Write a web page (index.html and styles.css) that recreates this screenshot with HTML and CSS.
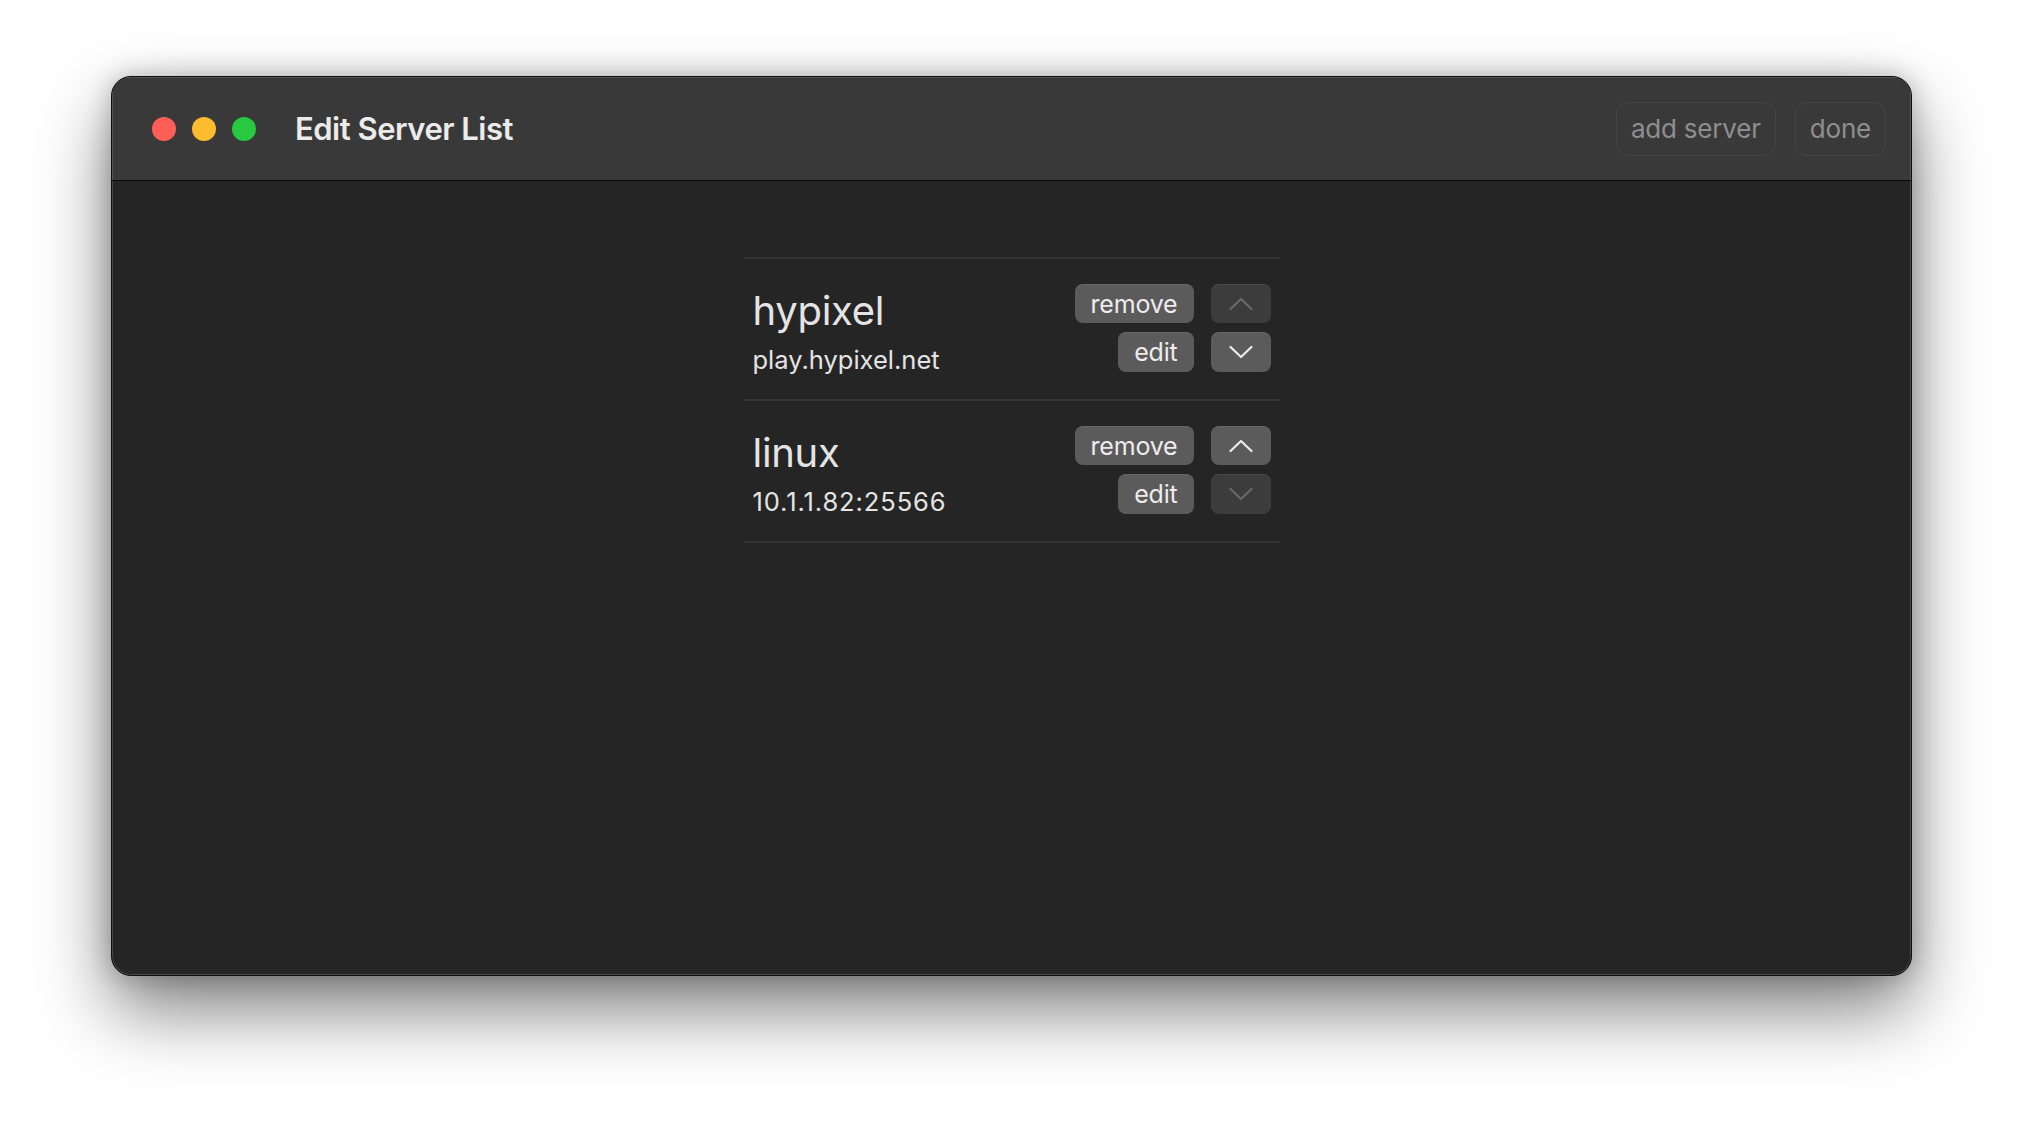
FILE: index.html
```html
<!DOCTYPE html>
<html>
<head>
<meta charset="utf-8">
<link rel="stylesheet" href="styles.css">
</head>
<body>
<div class="window">
  <header class="titlebar">
    <div class="lights">
      <span class="light red"></span>
      <span class="light yellow"></span>
      <span class="light green"></span>
    </div>
    <h1 class="title">Edit Server List</h1>
    <div class="toolbar">
      <button class="tb-btn">add server</button>
      <button class="tb-btn">done</button>
    </div>
  </header>
  <main class="content">
    <ul class="server-list">
      <li class="row">
        <div class="info">
          <div class="name">hypixel</div>
          <div class="addr">play.hypixel.net</div>
        </div>
        <div class="actions">
          <button class="btn">remove</button>
          <button class="btn arrow disabled"><svg viewBox="0 0 24 14" width="24" height="14"><path d="M1.5 12 L12 2 L22.5 12"/></svg></button>
          <button class="btn">edit</button>
          <button class="btn arrow"><svg viewBox="0 0 24 14" width="24" height="14"><path d="M1.5 2 L12 12 L22.5 2"/></svg></button>
        </div>
      </li>
      <li class="row">
        <div class="info">
          <div class="name">linux</div>
          <div class="addr addr-ip">10.1.1.82:25566</div>
        </div>
        <div class="actions">
          <button class="btn">remove</button>
          <button class="btn arrow"><svg viewBox="0 0 24 14" width="24" height="14"><path d="M1.5 12 L12 2 L22.5 12"/></svg></button>
          <button class="btn">edit</button>
          <button class="btn arrow disabled"><svg viewBox="0 0 24 14" width="24" height="14"><path d="M1.5 2 L12 12 L22.5 2"/></svg></button>
        </div>
      </li>
    </ul>
  </main>
</div>
</body>
</html>
```

FILE: styles.css
```css
html, body {
  margin: 0;
  padding: 0;
  background: #ffffff;
}
body {
  padding: 76px 0 0 111px;
  font-family: Inter, "Liberation Sans", sans-serif;
  height: 1124px;
  box-sizing: border-box;
  overflow: hidden;
}
.window {
  width: 1801px;
  height: 900px;
  box-sizing: border-box;
  border-radius: 20px;
  background: #262526;
  border: 1px solid #0e0e0e;
  box-shadow: inset 0 0 0 1px rgba(255,255,255,0.16),
              0 34px 72px rgba(0,0,0,0.5),
              0 0 26px rgba(0,0,0,0.24);
  overflow: hidden;
  display: flex;
  flex-direction: column;
}
.titlebar {
  height: 103px;
  flex: none;
  background: #3a393a;
  border-bottom: 1px solid #0a0a0a;
  display: flex;
  align-items: center;
  padding: 0 25px 0 40px;
  box-shadow: inset 0 1px 0 rgba(255,255,255,0.14), inset 1px 0 0 rgba(255,255,255,0.14), inset -1px 0 0 rgba(255,255,255,0.14);
}
.lights {
  display: flex;
  gap: 16px;
}
.light {
  width: 24px;
  height: 24px;
  border-radius: 50%;
  display: block;
}
.red { background: #ff5f57; }
.yellow { background: #febc2e; }
.green { background: #28c840; }
.title {
  margin: 0 0 0 39px;
  font-size: 31px;
  font-weight: 600;
  color: #ebebeb;
  letter-spacing: -0.5px;
  flex: 1;
}
.toolbar {
  display: flex;
  gap: 19px;
}
.tb-btn {
  height: 54px;
  padding: 0 14px;
  border-radius: 12px;
  border: 1.5px solid #454445;
  background: transparent;
  color: #8f8e8f;
  font-family: Inter, "Liberation Sans", sans-serif;
  font-size: 26px;
  letter-spacing: -0.2px;
}
.content {
  flex: 1;
  padding-top: 76px;
  display: flex;
  justify-content: center;
  align-items: flex-start;
}
.server-list {
  list-style: none;
  margin: 0;
  padding: 0;
  width: 536px;
  border-top: 2px solid #363536;
}
.row {
  display: flex;
  align-items: center;
  justify-content: space-between;
  height: 140px;
  padding: 0 9px;
  border-bottom: 2px solid #363536;
}
.info {
  display: flex;
  flex-direction: column;
  color: #e4e4e4;
  padding-top: 7px;
}
.name {
  font-size: 40px;
  line-height: 46px;
  letter-spacing: -0.3px;
}
.addr {
  margin-top: 8px;
  font-size: 25.5px;
  line-height: 36px;
}
.addr-ip {
  letter-spacing: 0.9px;
}
.actions {
  align-self: flex-start;
  margin-top: 25px;
  display: grid;
  grid-template-columns: auto 60px;
  grid-template-rows: 39px 40px;
  column-gap: 17px;
  row-gap: 9px;
  justify-items: end;
}
.btn {
  height: 100%;
  border-radius: 8px;
  border: none;
  background: #5c5b5c;
  color: #ececec;
  font-family: Inter, "Liberation Sans", sans-serif;
  font-size: 25px;
  padding: 0 16px;
  box-shadow: inset 0 1px 0 rgba(255,255,255,0.08);
  letter-spacing: -0.2px;
}
.arrow {
  width: 60px;
  padding: 0;
  display: flex;
  align-items: center;
  justify-content: center;
}
.arrow svg path {
  fill: none;
  stroke: #ededed;
  stroke-width: 2.2;
  stroke-linecap: round;
  stroke-linejoin: round;
}
.arrow.disabled {
  background: #3d3c3d;
}
.arrow.disabled svg path {
  stroke: #6a696a;
}
```
